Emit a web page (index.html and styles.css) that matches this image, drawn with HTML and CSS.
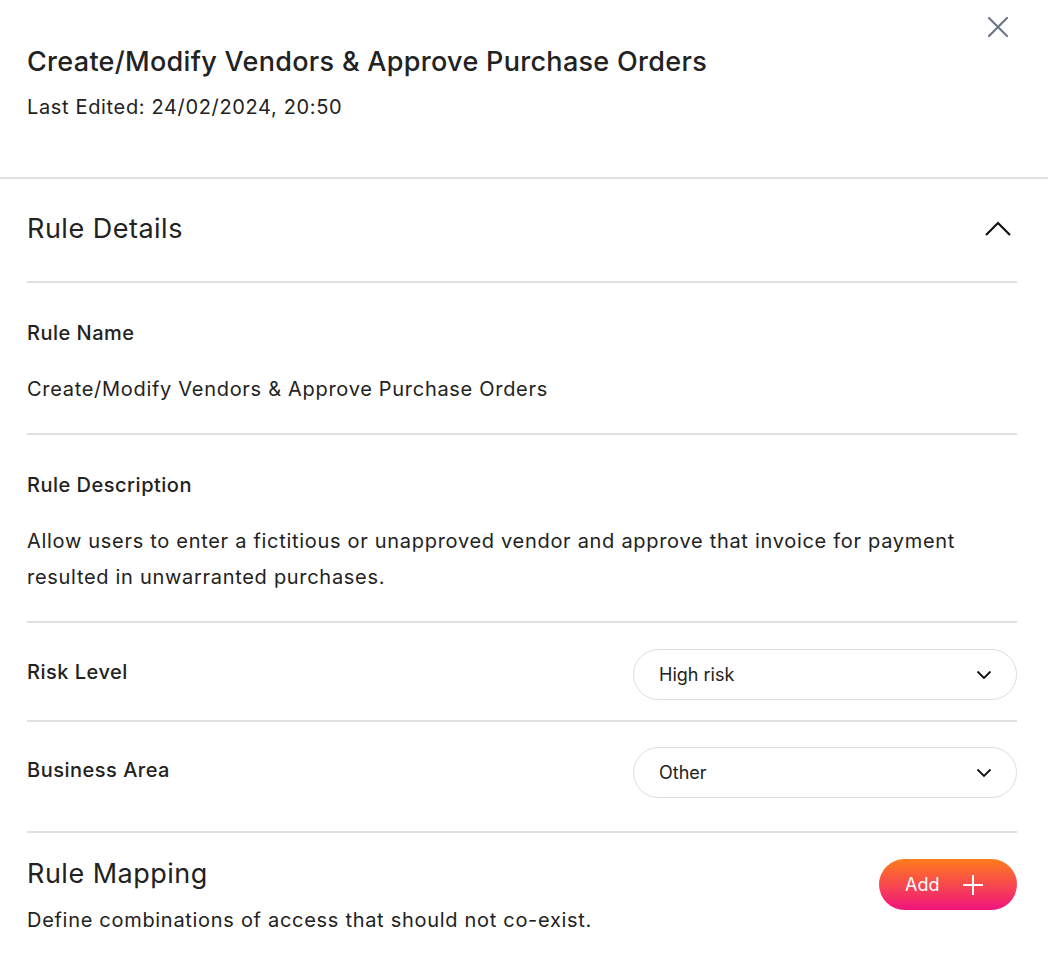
FILE: index.html
```html
<!DOCTYPE html>
<html lang="en">
  <head>
    <meta charset="UTF-8" />
    <meta name="viewport" content="width=device-width, initial-scale=1.0" />
    <title>Rule Details</title>
    <link rel="stylesheet" href="styles.css">
  </head>
  <body>
    <div class="panel">
      <header class="panel-header">
        <h1 class="title">Create/Modify Vendors &amp; Approve Purchase Orders</h1>
        <p class="edited">Last Edited: 24/02/2024, 20:50</p>
        <button class="close" aria-label="Close">
          <svg width="24" height="24" viewBox="0 0 24 24" fill="none" stroke="currentColor" stroke-width="2.2" stroke-linecap="round">
            <path d="M3 3 L21 21 M21 3 L3 21" />
          </svg>
        </button>
      </header>

      <div class="content">
        <div class="section-head">
          <h2>Rule Details</h2>
          <svg class="chev-up" width="28" height="16" viewBox="0 0 28 16" fill="none" stroke="#111" stroke-width="2.2">
            <path d="M2 14 L14 2 L26 14" />
          </svg>
        </div>

        <div class="field">
          <div class="label">Rule Name</div>
          <div class="value">Create/Modify Vendors &amp; Approve Purchase Orders</div>
        </div>

        <div class="field">
          <div class="label">Rule Description</div>
          <div class="value">Allow users to enter a fictitious or unapproved vendor and approve that invoice for payment resulted in unwarranted purchases.</div>
        </div>

        <div class="row">
          <div class="label">Risk Level</div>
          <div class="select">
            <span>High risk</span>
            <svg width="16" height="10" viewBox="0 0 16 10" fill="none" stroke="#111" stroke-width="1.8"><path d="M1.5 1.5 L8 8 L14.5 1.5" /></svg>
          </div>
        </div>

        <div class="row row-last">
          <div class="label">Business Area</div>
          <div class="select">
            <span>Other</span>
            <svg width="16" height="10" viewBox="0 0 16 10" fill="none" stroke="#111" stroke-width="1.8"><path d="M1.5 1.5 L8 8 L14.5 1.5" /></svg>
          </div>
        </div>

        <div class="mapping">
          <div>
            <h2>Rule Mapping</h2>
            <p class="hint">Define combinations of access that should not co-exist.</p>
          </div>
          <button class="add">
            Add
            <svg width="20" height="20" viewBox="0 0 20 20" fill="none" stroke="#fff" stroke-width="2"><path d="M10 0 V20 M0 10 H20" /></svg>
          </button>
        </div>
      </div>
    </div>
  </body>
</html>
```

FILE: styles.css
```css
* {
  box-sizing: border-box;
}

body {
  margin: 0;
  background: #ffffff;
  color: #222222;
  font-family: Inter, "Open Sans", Arial, sans-serif;
}

.panel {
  width: 1048px;
  min-height: 960px;
}

.panel-header {
  position: relative;
  padding: 44px 31px 0 27px;
  height: 179px;
  border-bottom: 2px solid #e0e0e0;
}

.title {
  margin: 0;
  font-size: 27px;
  line-height: 36px;
  font-weight: 500;
  letter-spacing: 0.3px;
}

.edited {
  margin: 13px 0 0;
  font-size: 20px;
  line-height: 28px;
  letter-spacing: 0.65px;
}

.close {
  position: absolute;
  top: 15px;
  right: 38px;
  padding: 0;
  border: none;
  background: none;
  color: #6d7789;
  cursor: pointer;
}

.close svg {
  display: block;
}

.content {
  padding: 0 31px 0 27px;
}

.section-head {
  display: flex;
  justify-content: space-between;
  align-items: center;
  padding: 32px 5px 34px 0;
  border-bottom: 2px solid #e0e0e0;
}

h2 {
  margin: 0;
  font-size: 27px;
  line-height: 36px;
  font-weight: 400;
  letter-spacing: 0.5px;
}

.field {
  padding: 36px 0 26px;
  border-bottom: 2px solid #e0e0e0;
}

.label {
  font-size: 20px;
  line-height: 28px;
  font-weight: 500;
  letter-spacing: 0.5px;
}

.value {
  margin-top: 24px;
  font-size: 20px;
  line-height: 36px;
  letter-spacing: 0.7px;
}

.row {
  display: flex;
  justify-content: space-between;
  align-items: center;
  padding: 26px 0 20px;
  border-bottom: 2px solid #e0e0e0;
}

.row .label {
  margin-top: -6px;
}

.row-last {
  padding: 25px 0 33px;
}

.select {
  width: 384px;
  height: 51px;
  display: flex;
  justify-content: space-between;
  align-items: center;
  padding: 0 25px;
  border: 1px solid #dedede;
  border-radius: 26px;
  font-size: 18px;
}

.select svg {
  margin-right: -1px;
}

.mapping {
  display: flex;
  justify-content: space-between;
  align-items: flex-start;
  padding-top: 23px;
}

.hint {
  margin: 14px 0 0;
  font-size: 20px;
  line-height: 28px;
  letter-spacing: 0.7px;
}

.add {
  margin-top: 3px;
  width: 138px;
  height: 51px;
  display: flex;
  align-items: center;
  gap: 24px;
  padding: 0 0 0 26px;
  border: none;
  border-radius: 26px;
  background: linear-gradient(180deg, #ff7d1c 0%, #f0147e 100%);
  color: #ffffff;
  font-family: inherit;
  font-size: 18px;
  cursor: pointer;
}
```
